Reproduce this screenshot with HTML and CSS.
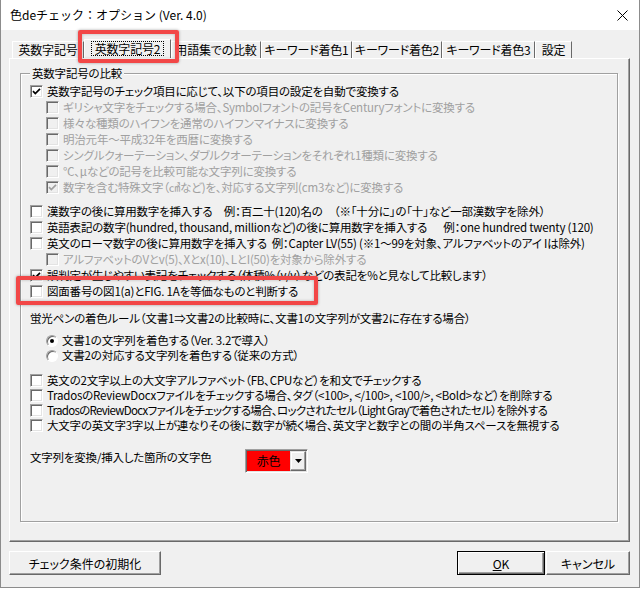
FILE: index.html
```
<!DOCTYPE html>
<html lang="ja">
<head>
<meta charset="utf-8">
<title>色deチェック：オプション</title>
<link rel="stylesheet" href="styles.css">
</head>
<body>
<div class="window">
  <div class="titlebar">
    <span class="title">色deチェック：オプション (Ver. 4.0)</span>
    <svg class="close" width="11" height="11" viewBox="0 0 11 11"><path d="M0.5 0.5L10.5 10.5M10.5 0.5L0.5 10.5" stroke="#000" stroke-width="1" fill="none"/></svg>
  </div>
  <div class="client">
    <div class="tabs">
      <div class="tab t1">英数字記号</div>
      <div class="tab t2 selected"><span class="focus">英数字記号2</span></div>
      <div class="tab t3">用語集での比較</div>
      <div class="tab t4">キーワード着色1</div>
      <div class="tab t5">キーワード着色2</div>
      <div class="tab t6">キーワード着色3</div>
      <div class="tab t7">設定</div>
    </div>
    <div class="panel">
      <div class="group">
        <div class="group-title">英数字記号の比較</div>
        <div class="block b1">
          <div class="row"><span class="cb checked"><svg viewBox="0 0 13 13"><path d="M3 6.2L5.3 8.6L10 3.8" /></svg></span><span>英数字記号のチェック項目に応じて、以下の項目の設定を自動で変換する</span></div>
          <div class="row sub disabled"><span class="cb"></span><span>ギリシャ文字をチェックする場合、Symbolフォントの記号をCenturyフォントに変換する</span></div>
          <div class="row sub disabled"><span class="cb"></span><span>様々な種類のハイフンを通常のハイフンマイナスに変換する</span></div>
          <div class="row sub disabled"><span class="cb"></span><span>明治元年～平成32年を西暦に変換する</span></div>
          <div class="row sub disabled"><span class="cb"></span><span>シングルクォーテーション、ダブルクオーテーションをそれぞれ1種類に変換する</span></div>
          <div class="row sub disabled"><span class="cb"></span><span>℃、μなどの記号を比較可能な文字列に変換する</span></div>
          <div class="row sub disabled"><span class="cb checked"><svg viewBox="0 0 13 13"><path d="M3 6.2L5.3 8.6L10 3.8" /></svg></span><span>数字を含む特殊文字（㎤など)を、対応する文字列(cm3など)に変換する</span></div>
        </div>
        <div class="block b2">
          <div class="row"><span class="cb"></span><span class="pre">漢数字の後に算用数字を挿入する　例：百二十(120)名の　（※「十分に」の「十」など一部漢数字を除外）</span></div>
          <div class="row"><span class="cb"></span><span class="pre">英語表記の数字(hundred, thousand, millionなど)の後に算用数字を挿入する　  例：one hundred twenty (120)</span></div>
          <div class="row"><span class="cb"></span><span class="pre">英文のローマ数字の後に算用数字を挿入する  例：Capter LV(55) (※1～99を対象、アルファベットのアイ Iは除外)</span></div>
          <div class="row sub disabled"><span class="cb"></span><span>アルファベットのVとv(5)、Xとx(10)、LとI(50)を対象から除外する</span></div>
          <div class="row"><span class="cb checked"><svg viewBox="0 0 13 13"><path d="M3 6.2L5.3 8.6L10 3.8" /></svg></span><span>誤判定が生じやすい表記をチェックする（体積%（v/v）などの表記を%と見なして比較します）</span></div>
          <div class="row"><span class="cb"></span><span>図面番号の図1(a)とFIG. 1Aを等価なものと判断する</span></div>
        </div>
        <div class="label-row">蛍光ペンの着色ルール（文書1⇒文書2の比較時に、文書1の文字列が文書2に存在する場合）</div>
        <div class="block b3">
          <div class="row sub r15"><span class="radio on"></span><span>文書1の文字列を着色する（Ver. 3.2で導入）</span></div>
          <div class="row sub r15"><span class="radio"></span><span>文書2の対応する文字列を着色する（従来の方式）</span></div>
        </div>
        <div class="block b4">
          <div class="row r15"><span class="cb"></span><span>英文の2文字以上の大文字アルファベット（FB、CPUなど）を和文でチェックする</span></div>
          <div class="row r15"><span class="cb"></span><span>TradosのReviewDocxファイルをチェックする場合、タグ（&lt;100&gt;, &lt;/100&gt;, &lt;100/&gt;, &lt;Bold&gt;など）を削除する</span></div>
          <div class="row r15"><span class="cb"></span><span class="tight">TradosのReviewDocxファイルをチェックする場合、ロックされたセル（Light Grayで着色されたセル）を除外する</span></div>
          <div class="row r15"><span class="cb"></span><span>大文字の英文字3字以上が連なりその後に数字が続く場合、英文字と数字との間の半角スペースを無視する</span></div>
        </div>
        <div class="color-row">
          <span class="color-label">文字列を変換/挿入した箇所の文字色</span>
          <span class="combo"><span class="combo-value">赤色</span><span class="combo-btn"><svg width="7" height="4" viewBox="0 0 7 4"><path d="M0 0H7L3.5 4Z" fill="#000"/></svg></span></span>
        </div>
      </div>
    </div>
    <div class="buttons">
      <div class="btn reset">チェック条件の初期化</div>
      <div class="spacer"></div>
      <div class="btn ok default"><span><u>O</u>K</span></div>
      <div class="btn cancel">キャンセル</div>
    </div>
  </div>
  <div class="mark mark-tab"></div>
  <div class="mark mark-row"></div>
</div>
</body>
</html>
```
FILE: styles.css
```
* { box-sizing: border-box; }
html, body { margin: 0; padding: 0; background: #fff; }
body {
  font-family: "Noto Sans CJK JP", "Noto Sans", sans-serif;
  font-size: 12px;
  color: #000;
  font-feature-settings: "palt" 1;
}
.window {
  position: relative;
  width: 640px;
  height: 588px;
  border: 1px solid #8c8c8c;
  border-top: none;
  background: #f0f0f0;
  display: flex;
  flex-direction: column;
}
.titlebar {
  height: 30px;
  background: #fff;
  display: flex;
  align-items: center;
  padding: 0 11px 0 9px;
  flex: none;
}
.title { flex: 1; font-feature-settings: normal; line-height: 16px; }
.close { display: block; }
.client {
  flex: 1;
  padding: 11px 9px 12px 8px;
  display: flex;
  flex-direction: column;
}
.tabs {
  display: flex;
  height: 17px;
  margin-left: 3px;
  flex: none;
}
.tab {
  height: 17px;
  line-height: 15px;
  text-align: center;
  border-top: 1px solid #fff;
  border-left: 1px solid #fff;
  border-right: 1px solid #696969;
  white-space: nowrap;
  letter-spacing: -0.2px;
}
.t1 { width: 72px; }
.t2 { width: 87px; }
.t3 { width: 90px; }
.t4 { width: 91px; }
.t5 { width: 90px; }
.t6 { width: 93px; }
.t7 { width: 37px; }
.tab.selected { height: 19px; margin-top: -2px; line-height: 17px; }
.focus { display: inline-block; outline: 1px dotted #000; padding: 0 3px; line-height: 13px; margin-top: 1px; }
.panel {
  height: 484px;
  flex: none;
  border: 1px solid;
  border-color: #fff #696969 #696969 #fff;
  box-shadow: inset -1px -1px 0 #a0a0a0;
  padding: 6px 11px 19px 10px;
  display: flex;
  flex-direction: column;
  font-size: 11.5px;
  letter-spacing: -0.2px;
}
.group {
  flex: 1;
  margin-top: 8px;
  border: 1px solid #a0a0a0;
  box-shadow: 1px 1px 0 #fff, inset 1px 1px 0 #fff;
  padding: 0 9px;
}
.group-title {
  width: fit-content;
  margin-top: -9px;
  padding: 0 2px;
  line-height: 16px;
  background: #f0f0f0;
}
.block.b1 { margin-top: 2px; }
.block.b2 { margin-top: 8px; }
.block.b3 { margin-top: 7px; }
.block.b4 { margin-top: 10px; }
.row {
  display: flex;
  align-items: center;
  height: 16px;
  line-height: 16px;
  white-space: nowrap;
}
.row.r15 { height: 15px; line-height: 15px; }
.row.sub { padding-left: 16px; }
.pre { white-space: pre; }
.tight { letter-spacing: -0.7px; }
.cb {
  flex: none;
  width: 13px;
  height: 13px;
  margin-right: 4px;
  background: #fff;
  border: 1px solid;
  border-color: #a0a0a0 #fff #fff #a0a0a0;
  box-shadow: inset 1px 1px 0 #696969, inset -1px -1px 0 #e3e3e3;
  position: relative;
}
.cb svg {
  position: absolute;
  left: -1px; top: -1px;
  width: 13px; height: 13px;
}
.cb svg path { fill: none; stroke: #000; stroke-width: 1.7; }
.disabled { color: #a0a0a0; }
.disabled .cb { background: #f0f0f0; }
.disabled .cb svg path { stroke: #a0a0a0; }
.label-row { margin-top: 11px; height: 16px; line-height: 16px; white-space: nowrap; }
.radio {
  flex: none;
  width: 12px;
  height: 12px;
  margin-right: 4px;
  border-radius: 50%;
  background: #fff;
  border: 1px solid;
  border-color: #a0a0a0 #fff #fff #a0a0a0;
  box-shadow: inset 1px 1px 0 #696969;
  position: relative;
}
.radio.on::after {
  content: "";
  position: absolute;
  left: 3px; top: 3px;
  width: 4px; height: 4px;
  border-radius: 50%;
  background: #000;
}
.color-row {
  margin-top: 16px;
  display: flex;
  align-items: flex-start;
}
.color-label { width: 215px; line-height: 16px; }
.combo {
  width: 63px;
  height: 24px;
  border: 1px solid;
  border-color: #a0a0a0 #fff #fff #a0a0a0;
  box-shadow: inset 1px 1px 0 #696969, inset -1px -1px 0 #e3e3e3;
  padding: 1px;
  display: flex;
  font-size: 12px;
}
.combo-value {
  flex: 1;
  background: #ff0000;
  text-align: center;
  line-height: 20px;
}
.combo-btn {
  width: 16px;
  border: 1px solid;
  border-color: #e3e3e3 #696969 #696969 #e3e3e3;
  box-shadow: inset -1px -1px 0 #a0a0a0, inset 1px 1px 0 #fff;
  background: #f0f0f0;
  display: flex;
  align-items: center;
  justify-content: center;
}
.combo-btn svg { display: block; }
.buttons {
  margin-top: 9px;
  display: flex;
  height: 24px;
}
.spacer { flex: 1; }
.btn {
  height: 24px;
  display: flex;
  align-items: center;
  justify-content: center;
  border: 1px solid;
  border-color: #fff #696969 #696969 #fff;
  box-shadow: inset -1px -1px 0 #a0a0a0;
  background: #f0f0f0;
  white-space: nowrap;
}
.reset { width: 152px; }
.ok { width: 88px; }
.cancel { width: 84px; margin-left: 1px; }
.btn.default {
  border: 1px solid #000;
  box-shadow: inset 1px 1px 0 #fff, inset -1px -1px 0 #696969, inset -2px -2px 0 #a0a0a0;
}
.mark {
  position: absolute;
  border: 4px solid #f24747;
  border-radius: 2px;
  box-shadow: 0 0 3px rgba(0,0,0,0.35), inset 0 0 3px rgba(0,0,0,0.25);
}
.mark-tab { left: 77px; top: 30px; width: 101px; height: 33px; }
.mark-row { left: 15px; top: 276px; width: 302px; height: 29px; }
```
